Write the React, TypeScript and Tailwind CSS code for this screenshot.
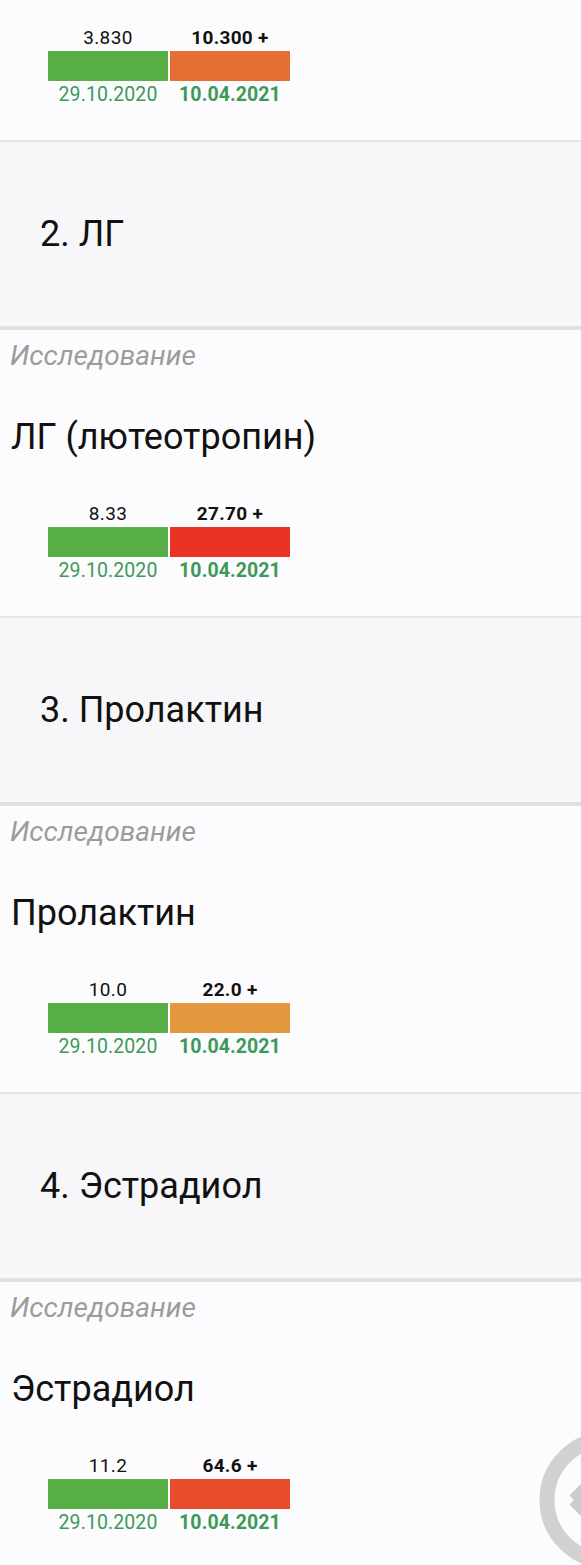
import React from 'react';

type Study = {
  num: number;
  title: string;
  name: string;
  prev: string;
  curr: string;
  color: string;
};

const studies: Study[] = [
  { num: 2, title: 'ЛГ', name: 'ЛГ (лютеотропин)', prev: '8.33', curr: '27.70 +', color: 'bg-[#e83325]' },
  { num: 3, title: 'Пролактин', name: 'Пролактин', prev: '10.0', curr: '22.0 +', color: 'bg-[#e3983f]' },
  { num: 4, title: 'Эстрадиол', name: 'Эстрадиол', prev: '11.2', curr: '64.6 +', color: 'bg-[#e74c2b]' },
];

function Chart({ prev, curr, color }: { prev: string; curr: string; color: string }) {
  return (
    <div className="ml-[48px] flex gap-[2px]">
      <div className="w-[120px] flex flex-col items-center">
        <div className="h-[22px] leading-[22px] text-[19px] tracking-[0.4px] text-[#111]">{prev}</div>
        <div className="mt-[2px] h-[30px] w-full bg-[#59af47]" />
        <div className="mt-[3px] h-[22px] leading-[22px] text-[19.5px] tracking-[0.1px] text-[#3d9957]">29.10.2020</div>
      </div>
      <div className="w-[120px] flex flex-col items-center">
        <div className="h-[22px] leading-[22px] text-[19px] tracking-[0.3px] font-bold text-[#111]">{curr}</div>
        <div className={`mt-[2px] h-[30px] w-full ${color}`} />
        <div className="mt-[3px] h-[22px] leading-[22px] text-[19.5px] tracking-[0.1px] font-bold text-[#3d9957]">10.04.2021</div>
      </div>
    </div>
  );
}

export default function App() {
  return (
    <div className="relative w-[581px] h-[1565px] overflow-hidden bg-[#fcfcfe] font-['Roboto',sans-serif]">
      {/* partial first study */}
      <div className="pt-[27px] pb-[34px]">
        <Chart prev="3.830" curr="10.300 +" color="bg-[#e36f35]" />
      </div>
      <div className="h-[2px] bg-[#e6e6e8]" />

      {studies.map((s, i) => (
        <div key={s.num}>
          <div className="h-[184px] flex items-center pl-[40px] bg-[#f7f7f9]">
            <span className="text-[36px] leading-[40px] text-[#111]">
              {s.num}. {s.title}
            </span>
          </div>
          <div className="h-[4px] bg-[#e1e1e3]" />
          <div className="pt-[13px] pb-[34px]">
            <div className="pl-[10px] text-[28px] leading-[26px] italic text-[#9c9c9c]">Исследование</div>
            <div className="mt-[49px] pl-[11px] text-[36px] leading-[38px] text-[#111]">{s.name}</div>
            <div className="mt-[47px]">
              <Chart prev={s.prev} curr={s.curr} color={s.color} />
            </div>
          </div>
          {i < studies.length - 1 && <div className="h-[2px] bg-[#e6e6e8]" />}
        </div>
      ))}

      {/* faded floating button */}
      <svg
        className="absolute left-[532px] top-[1424px]"
        width="160"
        height="160"
        viewBox="0 0 160 160"
      >
        <circle cx="76" cy="76" r="61" fill="none" stroke="#cccccc" strokeWidth="15" opacity="0.9" />
        <path d="M42 76 L66 52 M42 76 L66 100" stroke="#cccccc" strokeWidth="13" fill="none" />
      </svg>
    </div>
  );
}
